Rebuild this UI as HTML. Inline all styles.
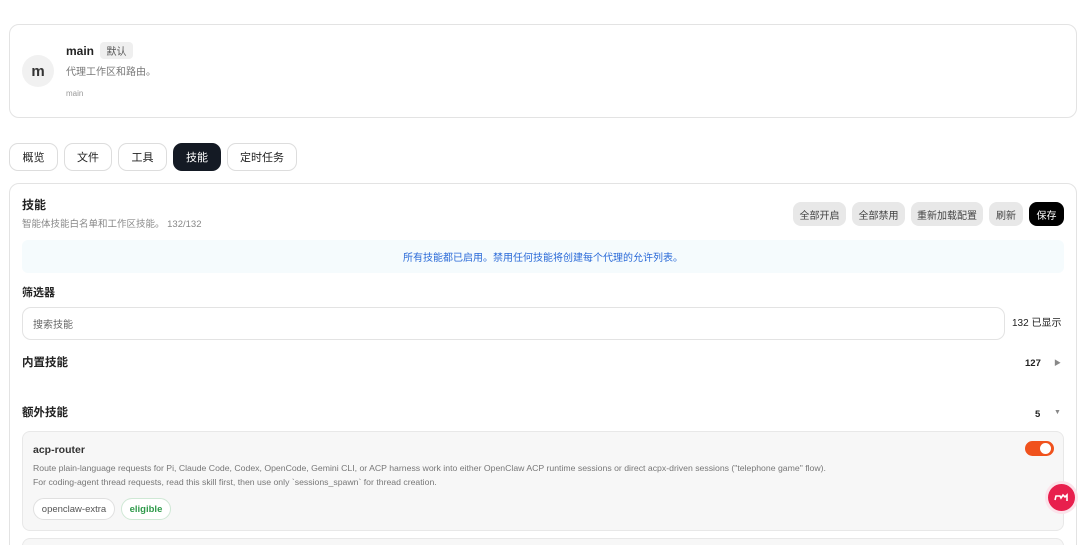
<!DOCTYPE html><html><head><meta charset="utf-8"><style>
*{box-sizing:border-box;margin:0;padding:0}
html,body{width:1080px;height:545px;overflow:hidden}
body{background:#fff;font-family:"Liberation Sans","Noto Sans CJK SC",sans-serif;color:#222;position:relative}
.a{position:absolute}
.c{display:flex;align-items:center;justify-content:center}
.card{border:1px solid #e3e3e3;border-radius:10px;background:#fff}
.tab{position:absolute;top:143px;height:28px;border:1px solid #ddd;border-radius:9px;font-size:11px;background:#fff;display:flex;align-items:center;justify-content:center}
.btn{position:absolute;top:202px;height:24px;border-radius:8px;background:#e8e8e8;font-size:10px;display:flex;align-items:center;justify-content:center;color:#444}
.pill{position:absolute;top:498px;height:22px;border:1px solid #e0e0e0;border-radius:11px;font-size:9.5px;display:flex;align-items:center;justify-content:center;background:#fff}
</style></head><body>
<div class="a card" style="left:9px;top:24px;width:1068px;height:94px"></div>
<div class="a c" style="left:22px;top:55px;width:32px;height:32px;border-radius:50%;background:#f1f1f1;font-size:15px;font-weight:bold;color:#333">m</div>
<div class="a" style="left:66px;top:44px;font-size:12px;font-weight:bold">main</div>
<div class="a c" style="left:100px;top:42px;width:33px;height:17px;background:#efefef;border-radius:4px;font-size:10px;color:#555">默认</div>
<div class="a" style="left:66px;top:66px;font-size:10px;line-height:14px;color:#777">代理工作区和路由。</div>
<div class="a" style="left:66px;top:89px;font-size:8px;color:#999">main</div>
<div class="tab" style="left:9px;width:49px">概览</div>
<div class="tab" style="left:64px;width:48px">文件</div>
<div class="tab" style="left:118px;width:49px">工具</div>
<div class="tab" style="left:173px;width:48px;background:#141a24;color:#fff;border-color:#141a24">技能</div>
<div class="tab" style="left:227px;width:70px">定时任务</div>
<div class="a card" style="left:9px;top:183px;width:1068px;height:380px"></div>
<div class="a" style="left:22px;top:197px;font-size:12px;line-height:16px;font-weight:bold">技能</div>
<div class="a" style="left:22px;top:218px;font-size:9.5px;line-height:14px;color:#888">智能体技能白名单和工作区技能。 132/132</div>
<div class="btn" style="left:793px;width:53px">全部开启</div>
<div class="btn" style="left:852px;width:53px">全部禁用</div>
<div class="btn" style="left:911px;width:72px">重新加载配置</div>
<div class="btn" style="left:989px;width:34px">刷新</div>
<div class="btn" style="left:1029px;width:35px;background:#000;color:#fff">保存</div>
<div class="a c" style="left:22px;top:240px;width:1042px;height:33px;background:#f5fbfd;border-radius:6px;font-size:10px;color:#2a6ad8">所有技能都已启用。禁用任何技能将创建每个代理的允许列表。</div>
<div class="a" style="left:22px;top:285px;font-size:11px;line-height:16px;font-weight:bold">筛选器</div>
<div class="a" style="left:22px;top:307px;width:983px;height:33px;border:1px solid #e3e3e3;border-radius:9px;font-size:10px;color:#666;display:flex;align-items:center;padding-left:10px">搜索技能</div>
<div class="a" style="left:1012px;top:316px;font-size:10px;line-height:16px;color:#222">132 已显示</div>
<div class="a" style="left:22px;top:355px;font-size:11.5px;line-height:16px;font-weight:bold">内置技能</div>
<div class="a" style="left:1025px;top:358px;font-size:9.5px;font-weight:bold">127</div>
<div class="a" style="left:1054px;top:358px;font-size:7px;color:#888">▶</div>
<div class="a" style="left:22px;top:405px;font-size:11.5px;line-height:16px;font-weight:bold">额外技能</div>
<div class="a" style="left:1035px;top:409px;font-size:9.5px;font-weight:bold">5</div>
<div class="a" style="left:1054px;top:409px;font-size:7px;color:#888">▼</div>
<div class="a" style="left:22px;top:431px;width:1042px;height:100px;background:#f7f7f7;border:1px solid #e8e8e8;border-radius:8px"></div>
<div class="a" style="left:33px;top:444px;font-size:10.5px;font-weight:bold;color:#333">acp-router</div>
<div class="a" style="left:33px;top:461px;font-size:8.7px;color:#777;line-height:14px;white-space:nowrap">Route plain-language requests for Pi, Claude Code, Codex, OpenCode, Gemini CLI, or ACP harness work into either OpenClaw ACP runtime sessions or direct acpx-driven sessions ("telephone game" flow).<br>For coding-agent thread requests, read this skill first, then use only `sessions_spawn` for thread creation.</div>
<div class="pill" style="left:33px;width:82px;color:#555">openclaw-extra</div>
<div class="pill" style="left:121px;width:50px;color:#2e9a4a;border-color:#cfe8d5;font-weight:bold">eligible</div>
<div class="a" style="left:1025px;top:441px;width:29px;height:15px;border-radius:8px;background:#f0521d"></div>
<div class="a" style="left:1040px;top:443px;width:11px;height:11px;border-radius:50%;background:#fff"></div>
<div class="a" style="left:22px;top:538px;width:1042px;height:20px;background:#f7f7f7;border:1px solid #e8e8e8;border-radius:8px"></div>
<div class="a" style="left:1045px;top:481px;width:33px;height:33px;border-radius:50%;background:#fbe3ea"></div>
<div class="a" style="left:1048px;top:484px;width:27px;height:27px;border-radius:50%;background:#e81f4d"></div>
<svg class="a" style="left:1054px;top:491px" width="15" height="12" viewBox="0 0 15 12"><path d="M1 9 L2 5 L6 5 L7 7 L9 4 L11 6 L13 4 L13 10" fill="none" stroke="#fff" stroke-width="1.6"/></svg>
</body></html>
